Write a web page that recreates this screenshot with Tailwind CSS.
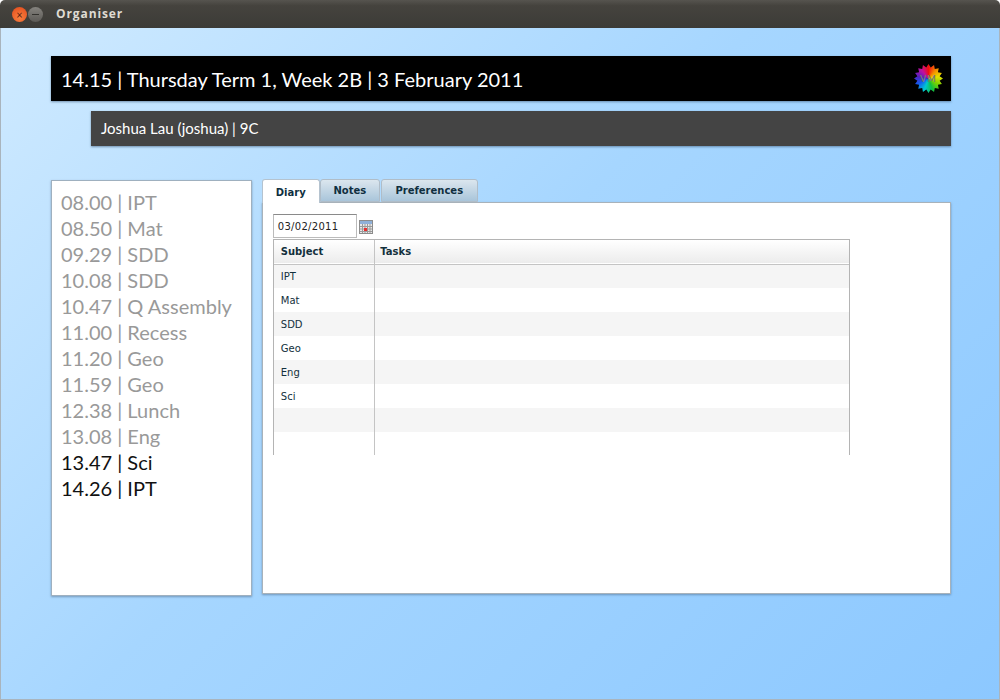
<!DOCTYPE html>
<html lang="en">
<head>
    <meta charset="UTF-8">
    <title>Organiser</title>
    <script src="https://cdn.jsdelivr.net/npm/@tailwindcss/browser@4"></script>
</head>
<body class="w-[1000px] h-[700px] overflow-hidden font-['Lato',sans-serif]">

    <!-- Title bar -->
    <div class="h-[28px] flex items-center pl-[12px] rounded-t-[5px] bg-[linear-gradient(#56544f,#45433e_20%,#3c3b37)]">
        <div class="w-[15px] h-[15px] rounded-full bg-[radial-gradient(circle_at_50%_70%,#f8803f,#e2491b)] flex items-center justify-center text-[11px] leading-none text-[#5a2010]">×</div>
        <div class="w-[15px] h-[15px] ml-[1px] rounded-full bg-[linear-gradient(#85837e,#5c5a56)] flex items-center justify-center">
            <div class="w-[7px] h-[1px] bg-[#33322e]"></div>
        </div>
        <span class="ml-[13px] text-[12px] font-bold tracking-[0.9px] text-[#dfdbd2] font-['Open_Sans',sans-serif]">Organiser</span>
    </div>

    <!-- Window body -->
    <div class="h-[672px] border-x border-b border-[#a9b4bd] pt-[28px] pl-[50px] pr-[48px] bg-[linear-gradient(135deg,#cfeaff,#a6d6ff_45%,#8cc8ff)]">

        <!-- Clock bar -->
        <div class="h-[45px] bg-black flex items-center justify-between pl-[10px] pr-[8px] shadow-[0_1px_2px_rgba(60,90,120,0.6)]">
            <span class="text-[20px] text-white">14.15 | Thursday Term 1, Week 2B | 3 February 2011</span>
            <div class="relative w-[29px] h-[29px]">
                <div class="w-full h-full bg-[conic-gradient(#f01010,#f58a00,#e6e000,#7fd000,#10c040,#00c8d0,#1060f0,#5020c0,#c010a0,#f01010)] [clip-path:polygon(100%_50%,88.3%_57.6%,96.2%_69.1%,82.4%_71.7%,85.4%_85.4%,71.7%_82.4%,69.1%_96.2%,57.6%_88.3%,50%_100%,42.4%_88.3%,30.9%_96.2%,28.3%_82.4%,14.6%_85.4%,17.6%_71.7%,3.8%_69.1%,11.7%_57.6%,0%_50%,11.7%_42.4%,3.8%_30.9%,17.6%_28.3%,14.6%_14.6%,28.3%_17.6%,30.9%_3.8%,42.4%_11.7%,50%_0%,57.6%_11.7%,69.1%_3.8%,71.7%_17.6%,85.4%_14.6%,82.4%_28.3%,96.2%_30.9%,88.3%_42.4%)]"></div>
                <span class="absolute inset-0 flex items-center justify-center text-[9px] font-bold tracking-[1px] text-[#777]">VM</span>
            </div>
        </div>

        <!-- User bar -->
        <div class="h-[35px] mt-[10px] ml-[40px] bg-[#444444] flex items-center pl-[10px] text-[15px] text-white shadow-[0_1px_2px_rgba(60,90,120,0.6)]">
            Joshua Lau (joshua) | 9C
        </div>

        <div class="flex gap-[10px] mt-[33px]">
            <!-- Timetable -->
            <div class="w-[201px] h-[416px] mt-[1px] bg-white border border-[#9fb0bf] pt-[8px] pl-[9px] text-[20px] leading-[26px] text-[#999999] shadow-[0_1px_2px_rgba(60,90,120,0.5)]">
                <div>08.00 | IPT</div>
                <div>08.50 | Mat</div>
                <div>09.29 | SDD</div>
                <div>10.08 | SDD</div>
                <div>10.47 | Q Assembly</div>
                <div>11.00 | Recess</div>
                <div>11.20 | Geo</div>
                <div>11.59 | Geo</div>
                <div>12.38 | Lunch</div>
                <div>13.08 | Eng</div>
                <div class="text-[#111111]">13.47 | Sci</div>
                <div class="text-[#111111]">14.26 | IPT</div>
            </div>

            <!-- Tabbed panel -->
            <div class="w-[690px] font-['DejaVu_Sans',sans-serif]">
                <div class="flex h-[24px] relative z-10 text-[10px] font-bold text-[#0f2f3f]">
                    <div class="w-[58px] h-[24px] bg-white border border-b-0 border-[#b5c3cf] rounded-t-[3px] flex items-center justify-center pt-[2px]">Diary</div>
                    <div class="w-[60px] h-[23px] bg-[linear-gradient(#dbe6ee,#a9c5da)] border border-[#b0bdc8] rounded-t-[3px] flex items-center justify-center">Notes</div>
                    <div class="w-[97px] h-[23px] ml-[1px] bg-[linear-gradient(#dbe6ee,#a9c5da)] border border-[#b0bdc8] rounded-t-[3px] flex items-center justify-center">Preferences</div>
                </div>
                <div class="h-[392px] -mt-[1px] bg-white border border-[#a8b2ba] pt-[11px] pl-[10px] shadow-[0_1px_2px_rgba(60,90,120,0.5)]">
                    <!-- Date picker -->
                    <div class="flex items-center h-[24px]">
                        <div class="w-[84px] h-[24px] border border-[#bbbbbb] border-t-[#8a8a8a] flex items-center pl-[4px] text-[10px] tracking-[0.3px] text-[#222]">03/02/2011</div>
                        <svg class="ml-[2px] mt-[2px]" width="14" height="14" viewBox="0 0 14 14">
                            <rect x="0.5" y="0.5" width="13" height="13" fill="#e8e8e8" stroke="#8c8c8c"/>
                            <rect x="1" y="1" width="12" height="3" fill="#8fb0d8"/>
                            <path d="M1 6.5H13M1 9H13M1 11.5H13M3.5 4V13M6 4V13M8.5 4V13M11 4V13" stroke="#9a9a9a" stroke-width="1"/>
                            <rect x="5" y="8" width="3" height="3" fill="#e83030"/>
                        </svg>
                    </div>
                    <!-- Diary table -->
                    <div class="w-[577px] h-[216px] mt-[1px] border border-[#b4b4b4]">
                        <table class="w-full table-fixed border-collapse text-[10px] text-[#12303c]">
                            <colgroup><col class="w-[101px]"><col></colgroup>
                            <thead>
                                <tr class="h-[24px] bg-[linear-gradient(#ffffff,#ececec)] border-b border-[#c4c4c4] text-left">
                                    <th class="pl-[7px] font-bold border-r border-[#c4c4c4]">Subject</th>
                                    <th class="pl-[5px] font-bold">Tasks</th>
                                </tr>
                            </thead>
                            <tbody>
                                <tr class="h-[24px] bg-[#f5f5f5]"><td class="pl-[7px] border-r border-[#c4c4c4]">IPT</td><td></td></tr>
                                <tr class="h-[24px] bg-white"><td class="pl-[7px] border-r border-[#c4c4c4]">Mat</td><td></td></tr>
                                <tr class="h-[24px] bg-[#f5f5f5]"><td class="pl-[7px] border-r border-[#c4c4c4]">SDD</td><td></td></tr>
                                <tr class="h-[24px] bg-white"><td class="pl-[7px] border-r border-[#c4c4c4]">Geo</td><td></td></tr>
                                <tr class="h-[24px] bg-[#f5f5f5]"><td class="pl-[7px] border-r border-[#c4c4c4]">Eng</td><td></td></tr>
                                <tr class="h-[24px] bg-white"><td class="pl-[7px] border-r border-[#c4c4c4]">Sci</td><td></td></tr>
                                <tr class="h-[24px] bg-[#f5f5f5]"><td class="border-r border-[#c4c4c4]"></td><td></td></tr>
                                <tr class="h-[23px] bg-white"><td class="border-r border-[#c4c4c4]"></td><td></td></tr>
                            </tbody>
                        </table>
                    </div>
                </div>
            </div>
        </div>
    </div>

</body>
</html>
